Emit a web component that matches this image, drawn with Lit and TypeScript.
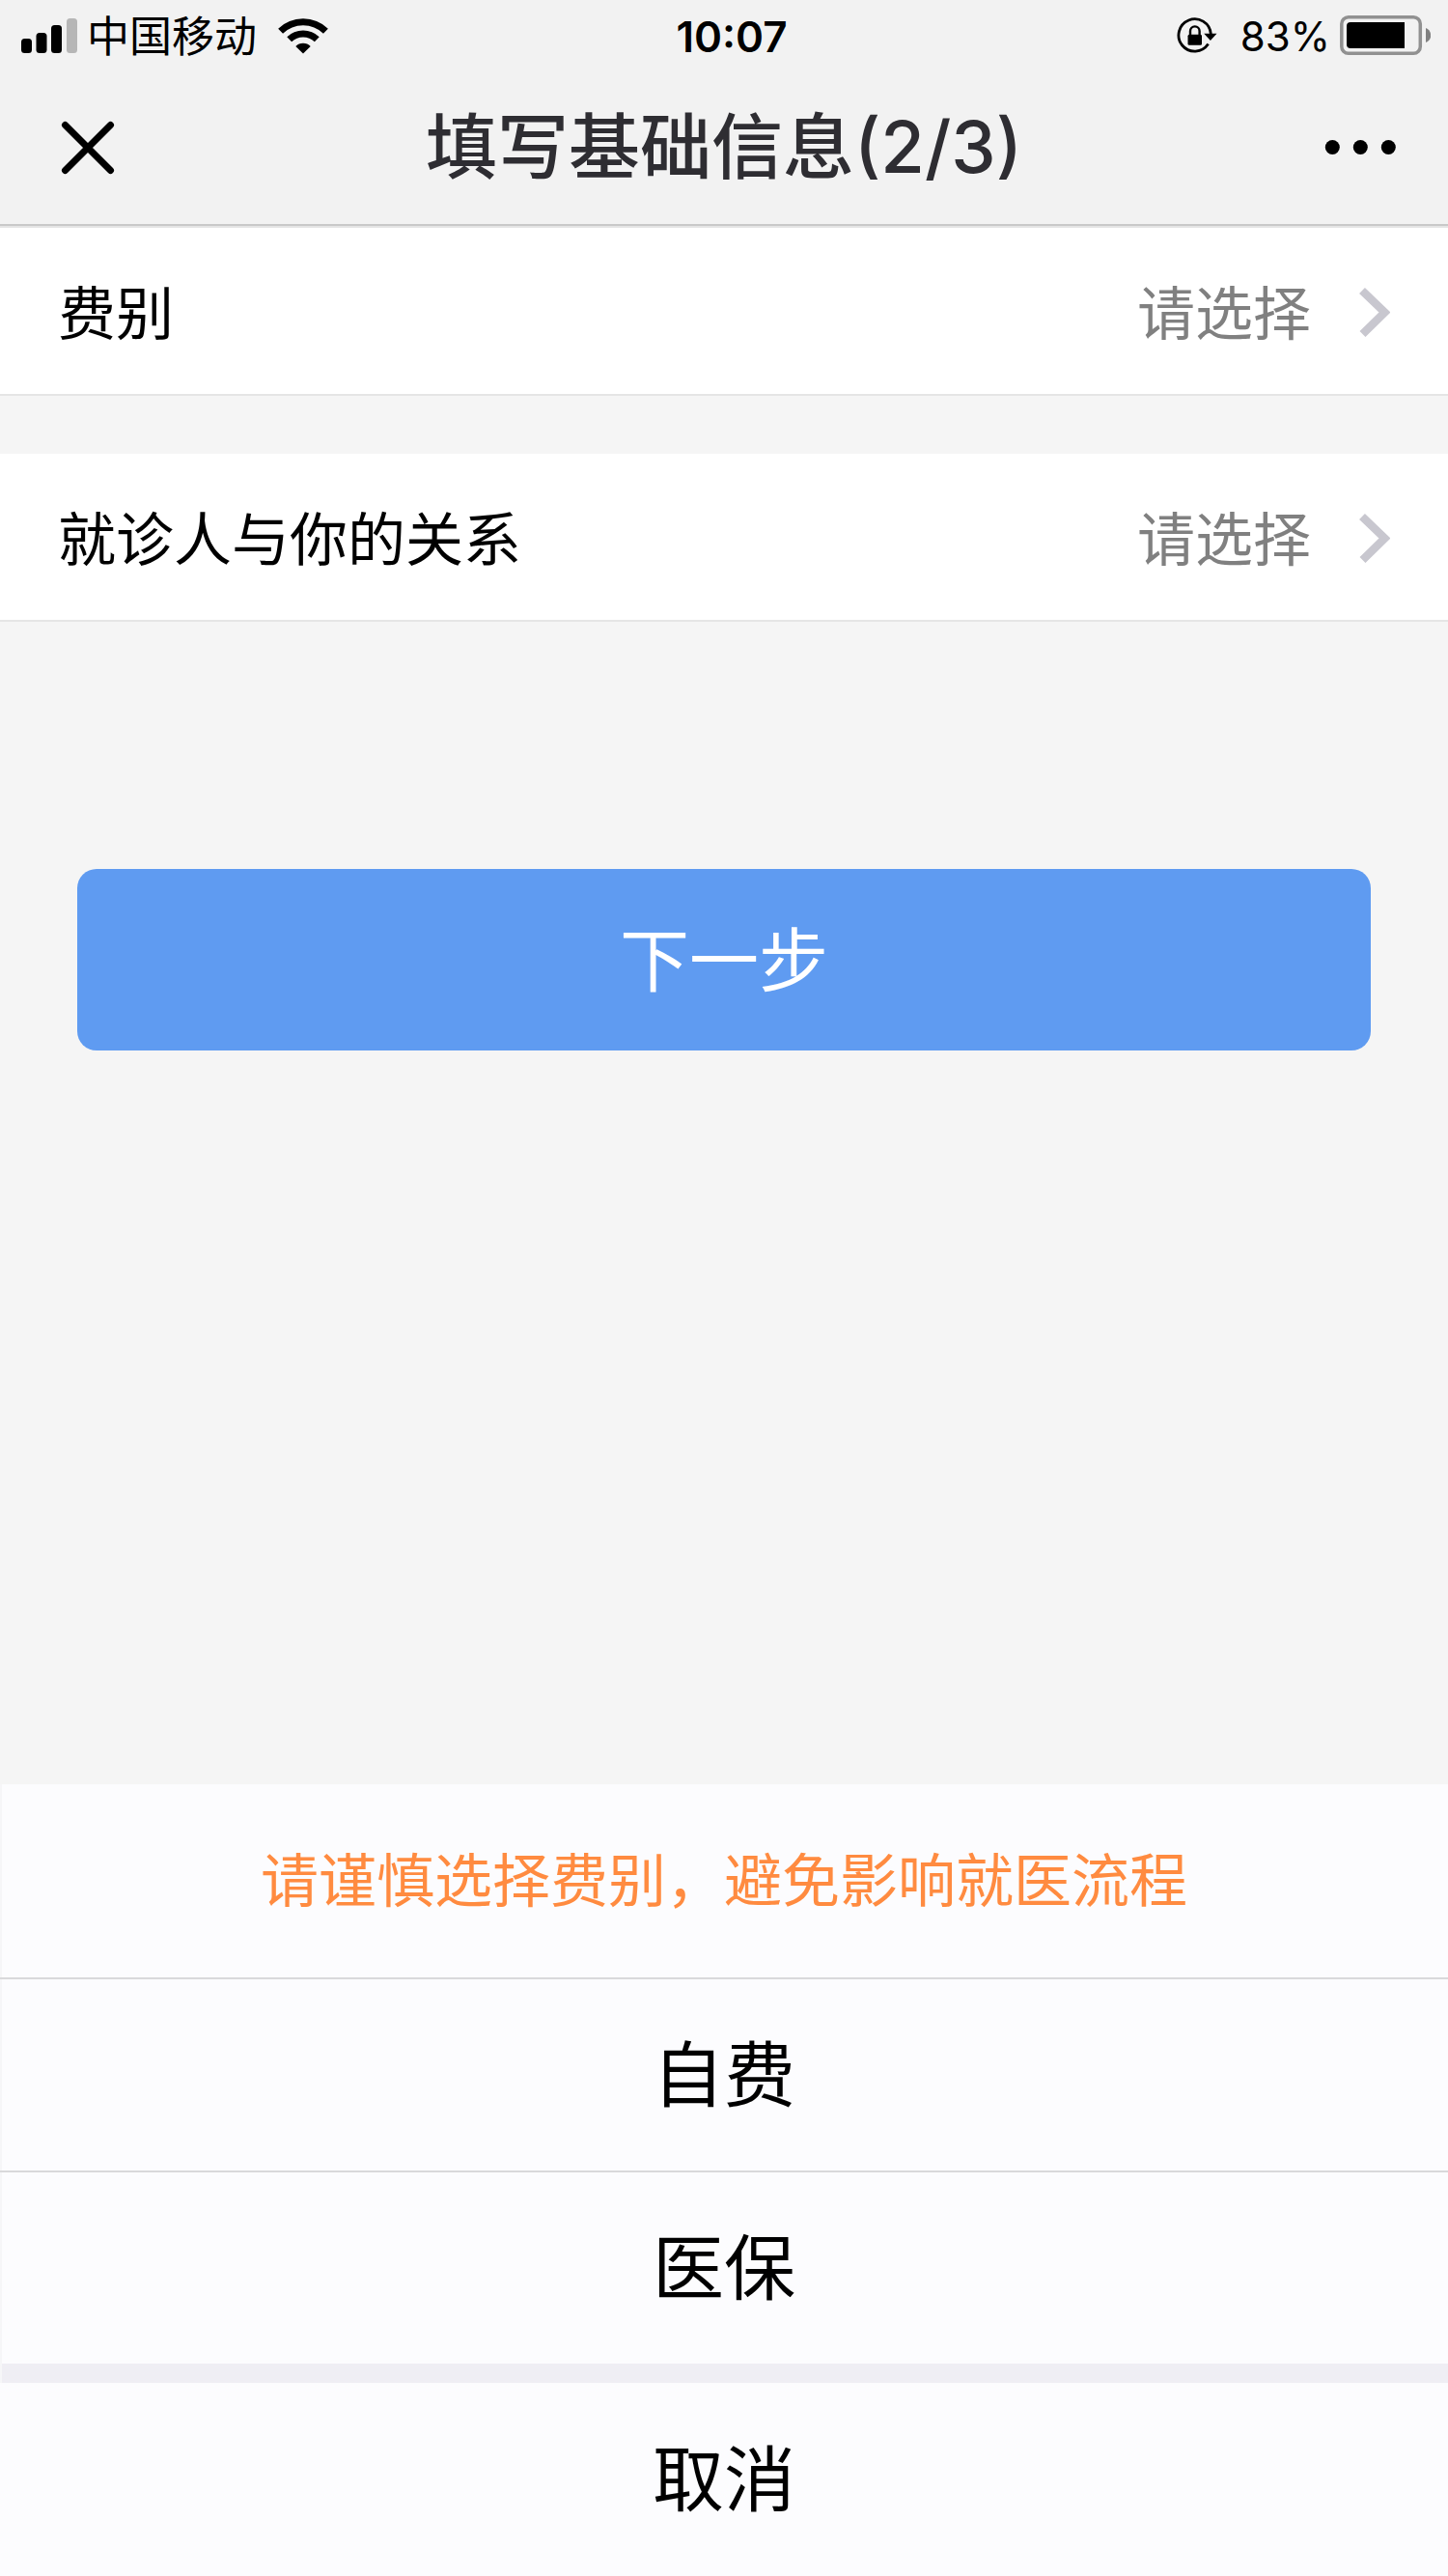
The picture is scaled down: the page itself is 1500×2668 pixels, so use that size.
import { LitElement, html, css, svg } from "lit";
import { customElement, property, state } from "lit/decorators.js";

const base = css`
  :host {
    display: block;
    font-family: Inter, "Noto Sans CJK SC", sans-serif;
    color: #000;
  }
  * {
    box-sizing: border-box;
  }
  button {
    margin: 0;
    padding: 0;
    border: 0;
    background: none;
    color: inherit;
    font: inherit;
    cursor: pointer;
  }
  svg {
    display: block;
    flex: none;
  }
`;

@customElement("status-bar")
class StatusBar extends LitElement {
  @property() carrier = "";
  @property() time = "";
  @property({ type: Number }) battery = 100;

  static styles = [
    base,
    css`
      .bar {
        display: grid;
        grid-template-columns: 1fr auto 1fr;
        align-items: center;
        height: 74px;
        padding: 0 18px 0 20px;
        font-size: 44px;
        line-height: 48px;
      }
      .side {
        display: flex;
        align-items: center;
      }
      .carrier {
        margin: 0 22px 0 10px;
        padding-top: 2px;
      }
      .time {
        padding: 2px 0 0 14px;
        font-weight: 600;
      }
      .right {
        justify-content: flex-end;
      }
      .level {
        margin: 0 10px 0 24px;
        padding-top: 2px;
        font-size: 42px;
      }
    `,
  ];

  render() {
    const fill = Math.round((72 * this.battery) / 100);
    return html`
      <div class="bar">
        <div class="side">
          <svg width="60" height="38" viewBox="0 0 60 38" role="img" aria-label="信号">
            <rect x="2" y="22" width="11" height="15" rx="3.5" />
            <rect x="17.500" y="16" width="11" height="21" rx="3.5" />
            <rect x="33" y="8" width="11" height="29" rx="3.5" />
            <rect x="49" y="1" width="11" height="36" rx="3.5" fill="#b6b6b6" />
          </svg>
          <span class="carrier">${this.carrier}</span>
          <svg width="52" height="38" viewBox="0 0 52 38" role="img" aria-label="Wi-Fi">
            <path d="M26 37.500 18.300 29.900A11 11 0 0 1 33.700 29.900Z" />
            <g fill="none" stroke="#000" stroke-width="7">
              <path d="M11.700 22.700A20.600 20.600 0 0 1 40.300 22.700" />
              <path d="M2.600 14.300A33.500 33.500 0 0 1 49.400 14.300" />
            </g>
          </svg>
        </div>
        <time class="time">${this.time}</time>
        <div class="side right">
          <svg width="42" height="38" viewBox="0 0 42 38" role="img" aria-label="屏幕方向锁定">
            <path
              d="M32.600 27.600A16.700 16.700 0 1 1 35.300 17"
              fill="none"
              stroke="#000"
              stroke-width="2.800"
            />
            <path d="M28.200 16.800H41.500L34.900 24Z" />
            <rect x="11.500" y="17.800" width="14.500" height="11" rx="1.500" />
            <path
              d="M14 19V14.200a4.800 4.800 0 0 1 9.600 0V19"
              fill="none"
              stroke="#000"
              stroke-width="2.400"
            />
          </svg>
          <span class="level">${this.battery}%</span>
          <svg width="94" height="42" viewBox="0 0 94 42" role="img" aria-label="电量">
            <rect
              x="1.800"
              y="1.800"
              width="81.500"
              height="37.500"
              rx="7"
              fill="none"
              stroke="#919191"
              stroke-width="3.500"
            />
            ${svg`<path d=${`M11 7H${7 + fill}V34H11a4 4 0 0 1-4-4V11a4 4 0 0 1 4-4Z`} />`}
            <path d="M89 13c7 3 7 12 0 15Z" fill="#808080" />
          </svg>
        </div>
      </div>
    `;
  }
}

@customElement("nav-bar")
class NavBar extends LitElement {
  @property() heading = "";

  static styles = [
    base,
    css`
      .bar {
        display: grid;
        grid-template-columns: 1fr auto 1fr;
        align-items: center;
        height: 158px;
        padding: 0 50px 2px;
      }
      .title {
        margin: 0;
        color: #2e2d32;
        font-size: 74px;
        line-height: 88px;
        font-weight: 500;
      }
      .more {
        justify-self: end;
      }
      .close {
        justify-self: start;
      }
    `,
  ];

  render() {
    return html`
      <div class="bar">
        <button class="close" aria-label="关闭">
          <svg width="84" height="62" viewBox="0 0 84 62">
            <path
              d="M17.500 8.500 64.500 55.500M64.500 8.500 17.500 55.500"
              stroke="#000"
              stroke-width="7"
              stroke-linecap="round"
            />
          </svg>
        </button>
        <h1 class="title">${this.heading}</h1>
        <button class="more" aria-label="更多">
          <svg width="84" height="62" viewBox="0 0 84 62">
            <circle cx="14.300" cy="31.500" r="7.500" />
            <circle cx="43.300" cy="31.500" r="7.500" />
            <circle cx="72.300" cy="31.500" r="7.500" />
          </svg>
        </button>
      </div>
    `;
  }
}

@customElement("select-cell")
class SelectCell extends LitElement {
  @property() label = "";
  @property() value = "";

  static styles = [
    base,
    css`
      .cell {
        display: flex;
        align-items: center;
        width: 100%;
        padding: 45px 60px 39px;
        border-bottom: 2px solid #e5e5e5;
        background: #fff;
        font-size: 60px;
        line-height: 88px;
        text-align: left;
      }
      .label {
        flex: 1;
      }
      .value {
        margin-right: 50px;
        color: #808080;
      }
    `,
  ];

  render() {
    return html`
      <button class="cell" aria-haspopup="dialog">
        <span class="label">${this.label}</span>
        <span class="value">${this.value || "请选择"}</span>
        <svg width="32" height="56" viewBox="0 0 32 56" aria-hidden="true">
          <path d="M3 4 26.500 26.500 3.500 49" fill="none" stroke="#c8c7cf" stroke-width="8.500" />
        </svg>
      </button>
    `;
  }
}

@customElement("action-sheet")
class ActionSheet extends LitElement {
  @property() hint = "";
  @property({ attribute: false }) options: string[] = [];

  static styles = [
    base,
    css`
      .sheet {
        background: #fcfcfe;
      }
      .hint,
      .item {
        display: block;
        width: 100%;
        margin: 0;
        padding: 55px 0;
        text-align: center;
        line-height: 88px;
        box-shadow: inset 2px 0 #f6f6f8;
      }
      .hint {
        padding: 56px 0;
        color: #ff8b40;
        font-size: 60px;
      }
      .item {
        font-size: 74px;
      }
      .option {
        border-top: 2px solid #d9d9db;
      }
      .gap {
        height: 20px;
        background: #efeef4;
        box-shadow: inset 2px 0 #f6f6f8;
      }
      .cancel {
        padding: 56px 0;
        box-shadow: none;
      }
    `,
  ];

  private pick(value: string) {
    this.dispatchEvent(new CustomEvent("pick", { detail: value }));
  }

  render() {
    return html`
      <div class="sheet" role="dialog" aria-label=${this.hint}>
        <p class="hint">${this.hint}</p>
        ${this.options.map(
          (o) => html`<button class="item option" @click=${() => this.pick(o)}>${o}</button>`
        )}
        <div class="gap"></div>
        <button class="item cancel">取消</button>
      </div>
    `;
  }
}

@customElement("app-root")
class AppRoot extends LitElement {
  @state() private fee = "";

  static styles = [
    base,
    css`
      .page {
        display: flex;
        flex-direction: column;
        min-height: 100vh;
        background: #f5f5f5;
      }
      .header {
        border-bottom: 2px solid #c9c9c9;
        background: #f2f2f2;
      }
      .form {
        display: flex;
        flex-direction: column;
        gap: 60px;
        border-top: 2px solid #e5e5e5;
      }
      .actions {
        padding: 256px 80px 80px;
      }
      .next {
        display: block;
        width: 100%;
        padding: 51px 0 49px;
        border-radius: 20px;
        background: #5f9bf1;
        color: #fff;
        font-size: 72px;
        line-height: 88px;
      }
      .sheet {
        margin-top: auto;
      }
    `,
  ];

  render() {
    return html`
      <div class="page">
        <header class="header">
          <status-bar carrier="中国移动" time="10:07" battery="83"></status-bar>
          <nav-bar heading="填写基础信息(2/3)"></nav-bar>
        </header>
        <main>
          <div class="form">
            <select-cell label="费别" .value=${this.fee}></select-cell>
            <select-cell label="就诊人与你的关系"></select-cell>
          </div>
          <div class="actions">
            <button class="next">下一步</button>
          </div>
        </main>
        <action-sheet
          class="sheet"
          hint="请谨慎选择费别，避免影响就医流程"
          .options=${["自费", "医保"]}
          @pick=${(e: CustomEvent<string>) => (this.fee = e.detail)}
        ></action-sheet>
      </div>
    `;
  }
}
